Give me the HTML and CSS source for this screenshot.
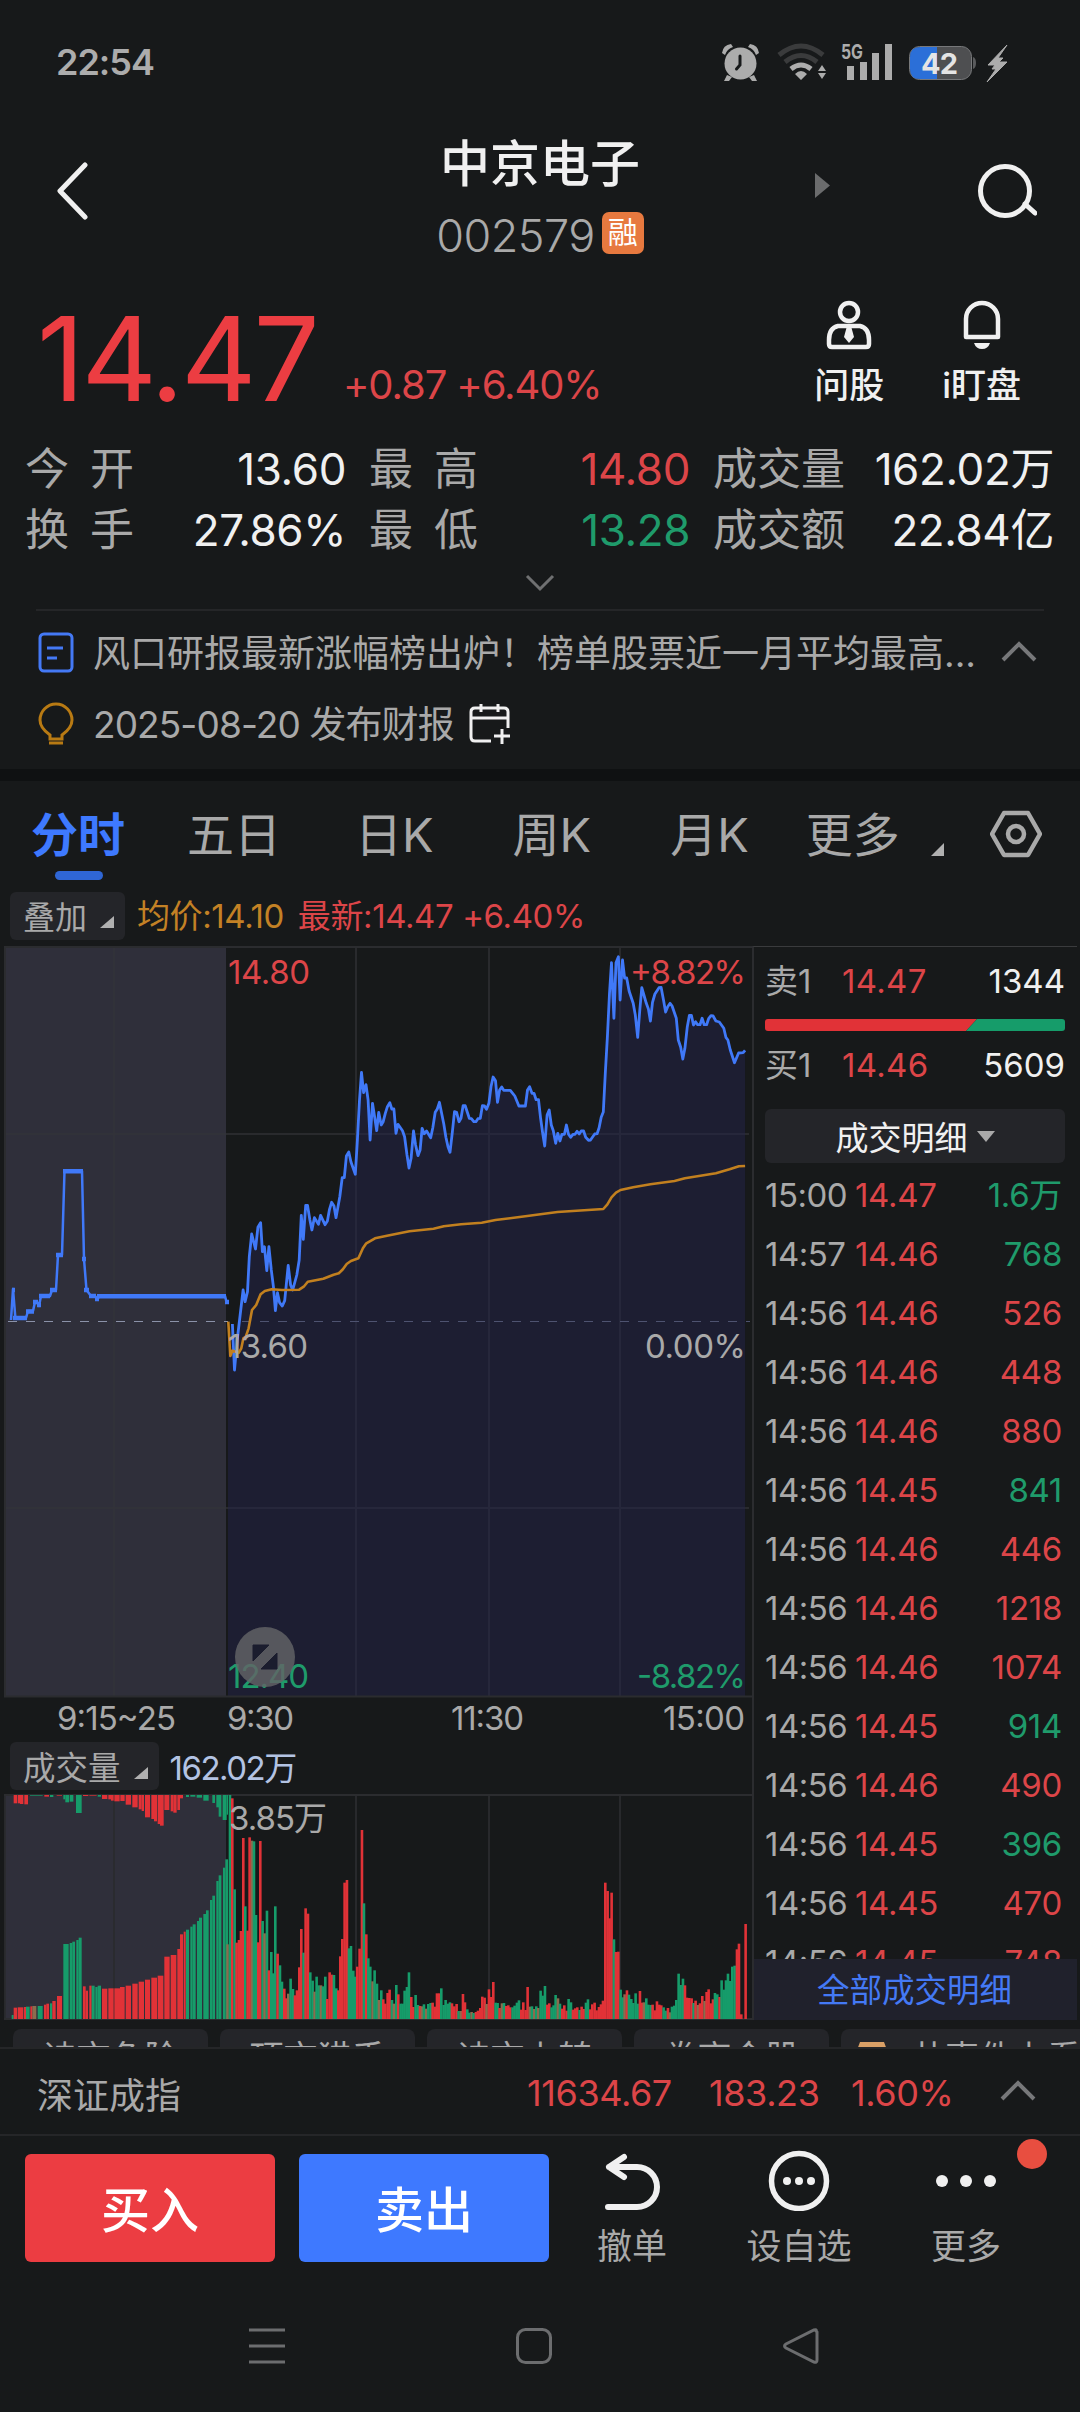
FILE: index.html
```html
<!DOCTYPE html>
<html lang="zh-CN">
<head>
<meta charset="utf-8">
<title>中京电子 002579</title>
<link rel="stylesheet" href="styles.css">
</head>
<body>
<div class="status">
  <span class="clock">22:54</span>
  <svg class="status-icons" width="292" height="44" viewBox="720 40 292 44">
    <g fill="#acacac">
      <ellipse cx="740.500" cy="63.500" rx="16" ry="16"/>
      <path d="M727 75l-3 6h5l3-4zM754 75l3 6h-5l-3-4z"/>
      <path d="M722 53q1-8 9-9l2 3q-6 2-8 8zM759 53q-1-8-9-9l-2 3q6 2 8 8z"/>
      <path d="M740 56v9l-3.500 4" fill="none" stroke="#17191a" stroke-width="3" stroke-linecap="round"/>
    </g>
    <g fill="none" stroke-width="5">
      <path d="M779 55q22-18 44 0" stroke="#3a3b3c"/>
      <path d="M785 62q16-13 32 0" stroke="#3a3b3c"/>
      <path d="M791 69q10-8 20 0" stroke="#acacac"/>
    </g>
    <path d="M801 80l-6-6q6-6 12 0zM822 65l4 6h-8zM822 79l4-6h-8z" fill="#acacac"/>
    <text x="841" y="59" class="fiveg" textLength="22" lengthAdjust="spacingAndGlyphs">5G</text>
    <path d="M847 66h7v14h-7zM860 62h7v18h-7zM872 53h7v27h-7zM885 44h7v36h-7z" fill="#acacac"/>
    <rect x="909.500" y="46.500" width="62" height="33" rx="10" fill="#4e4f51" stroke="#77787a"/>
    <path d="M937 47h-17q-10 0-10 10v12q0 10 10 10h17z" fill="#2b6fd8"/>
    <path d="M973 57q3 1 3 6t-3 6z" fill="#5a5b5d"/>
    <text x="921" y="74" class="batt" textLength="37">42</text>
    <path d="M1007 45l-19 20h7l-3 4h4l-9 13 20-20h-8l4-4h-5z" fill="#acacac" stroke="#acacac" stroke-linejoin="round"/>
  </svg>
</div>

<header class="header">
  <svg class="back" width="32" height="58" viewBox="0 0 32 58"><path d="M29 3L4 29l25 26" fill="none" stroke="#f0f0f0" stroke-width="5" stroke-linecap="round" stroke-linejoin="round"/></svg>
  <div class="title">
    <h1>中京电子</h1>
    <div class="code"><span>002579</span><b>融</b></div>
  </div>
  <div class="header-right">
    <svg width="15" height="25" viewBox="0 0 15 25"><path d="M0 0l15 12.500L0 25z" fill="#6b6c6d"/></svg>
    <svg class="search" width="62" height="58" viewBox="975 162 62 58"><g fill="none" stroke="#f0f0f0" stroke-width="5" stroke-linecap="round"><circle cx="1005" cy="191" r="24.500"/><path d="M1025 204l10 9"/></g></svg>
  </div>
</header>

<section class="quote">
  <div class="price">14.47</div>
  <div class="change">+0.87 +6.40%</div>
  <div class="act act-ask">
    <svg width="48" height="50" viewBox="0 0 48 50"><g fill="none" stroke="#f0f0f0" stroke-width="4.500"><circle cx="24" cy="12" r="9"/><path d="M13 26h22q9 2 9 14v4q0 3-3 3H7q-3 0-3-3v-4q0-12 9-14z" stroke-linejoin="round"/></g><path d="M22 26h4l3 11-5 6-5-6z" fill="#f0f0f0"/></svg>
    <span>问股</span>
  </div>
  <div class="act">
    <svg width="40" height="50" viewBox="0 0 40 50"><path d="M4 37V19a16 16 0 0 1 32 0v18z" fill="none" stroke="#f0f0f0" stroke-width="4.500" stroke-linejoin="round"/><path d="M12 43h16q-2 6-8 6t-8-6z" fill="#f0f0f0"/></svg>
    <span>i盯盘</span>
  </div>
</section>

<section class="stats">
  <span class="lab"><i>今</i><i>开</i></span><span class="val">13.60</span>
  <span class="lab inset"><i>最</i><i>高</i></span><span class="val up">14.80</span>
  <span class="lab inset"><i>成</i><i>交</i><i>量</i></span><span class="val">162.02万</span>
  <span class="lab"><i>换</i><i>手</i></span><span class="val">27.86%</span>
  <span class="lab inset"><i>最</i><i>低</i></span><span class="val down">13.28</span>
  <span class="lab inset"><i>成</i><i>交</i><i>额</i></span><span class="val">22.84亿</span>
</section>
<div class="expand"><svg width="30" height="18" viewBox="0 0 30 18"><path d="M2 2l13 13L28 2" fill="none" stroke="#6f7071" stroke-width="3"/></svg></div>

<section class="news">
  <div class="news-row">
    <svg width="36" height="42" viewBox="0 0 36 42"><g fill="none" stroke="#4479f5" stroke-width="3"><rect x="2" y="2" width="32" height="37" rx="4"/><path d="M9 16h16M9 26h10"/></g></svg>
    <p>风口研报最新涨幅榜出炉！榜单股票近一月平均最高...</p>
    <svg class="news-up" width="36" height="22" viewBox="0 0 36 22"><path d="M2 20L18 4l16 16" fill="none" stroke="#77787a" stroke-width="4"/></svg>
  </div>
  <div class="news-row">
    <svg width="36" height="44" viewBox="0 0 36 44"><g fill="none" stroke="#b87a13" stroke-width="3"><path d="M12 37v-4Q2 26 2 18a16 16 0 0 1 32 0q0 8-10 15v4z"/><path d="M11 41h14"/></g></svg>
    <p class="report">2025-08-20 发布财报</p>
    <svg class="cal" width="42" height="42" viewBox="0 0 42 42"><g fill="none" stroke="#f0f0f0" stroke-width="3"><path d="M22 38H6q-4 0-4-4V9q0-4 4-4h29q4 0 4 4v16M2 15h37M12 1v8M29 1v8M25 33h16M33 26v15"/></g></svg>
  </div>
</section>
<div class="band"></div>

<nav class="tabs">
  <span class="tab on">分时</span><span class="tab five">五日</span><span class="tab day">日K</span><span class="tab week">周K</span><span class="tab month">月K</span><span class="tab more">更多</span>
  <svg class="corner" width="13" height="13" viewBox="0 0 13 13"><path d="M13 0v13H0z" fill="#b0b0b0"/></svg>
  <svg class="hex" width="52" height="48" viewBox="0 0 52 48"><g fill="none" stroke="#a9a9a9" stroke-width="4.500" stroke-linejoin="round"><path d="M14 3h24l12 21-12 21H14L2 24z"/><circle cx="26" cy="24" r="8"/></g></svg>
</nav>

<div class="legend">
  <span class="chip">叠加<svg width="14" height="12" viewBox="0 0 14 12"><path d="M14 0v12H0z" fill="#b0b0b0"/></svg></span>
  <span class="avg">均价:14.10</span>
  <span class="last">最新:14.47 +6.40%</span>
</div>

<main class="board">
  <div class="charts">
    <svg class="chart" width="752" height="793" viewBox="0 946 752 793">
      <rect x="5" y="947" width="221" height="749" fill="#2f2f3a"/>
      <g stroke="#292a2d" stroke-width="2" fill="none">
        <path d="M356 947v749M489 947v749M620 947v749M226 1134h523M226 1508h523"/>
      </g>
      <path id="area" fill="#24244a" fill-opacity=".5"/>
      <g stroke="#33343a" stroke-width="1.500" fill="none"><path d="M114 947v749M5 1134h221M5 1508h221"/></g>
      <path d="M4 947h748M4 1696.500h748M5 946v750" stroke="#2b2c2f" stroke-width="2" fill="none"/>
      <path d="M8 1321.500h220" stroke="#8b92a8" stroke-width="1" stroke-dasharray="9 9"/>
      <path d="M242 1321.500h508" stroke="#4e5370" stroke-width="1" stroke-dasharray="9 9"/>
      <g fill="none" stroke="#4079f8" stroke-linejoin="round">
        <path stroke-width="2.500" d="M11 1320L13 1289L15.400 1318H26L28 1311H33L35 1302H37L39 1306L41 1296H50L52 1290H56L58 1255H62L64.500 1171H82L84 1259L86.500 1290L91 1296H95L97.500 1299L99.500 1296H225L226.500 1302"/>
        <path stroke-width="4.500" d="M13 1318H27M26 1311.500H34M33 1302H38M39 1296H50M50 1290H57M56 1255H63M63 1171.300H83M89 1296H96M97 1296.300H226M12 1290h3M37 1305h4M82 1259h4M84 1290h5M95 1299h4M225 1302h4"/>
        <path id="price" stroke-width="2.800"/>
      </g>
      <path id="mean" fill="none" stroke="#c2801f" stroke-width="2.600" stroke-linejoin="round"/>
      <g class="axis">
        <text x="228" y="984" class="up" textLength="82">14.80</text>
        <text x="630" y="984" class="up" textLength="116">+8.82%</text>
        <text x="228" y="1358" textLength="80">13.60</text>
        <text x="645" y="1358" textLength="101">0.00%</text>
        <text x="228" y="1688" class="down" textLength="81">12.40</text>
        <text x="637" y="1688" class="down" textLength="109">-8.82%</text>
        <text x="57" y="1730" textLength="119">9:15~25</text>
        <text x="227" y="1730" textLength="67">9:30</text>
        <text x="451" y="1730" textLength="73">11:30</text>
        <text x="663" y="1730" textLength="82">15:00</text>
      </g>
      <circle cx="265" cy="1657" r="30" fill="#636466" fill-opacity=".82"/>
      <path d="M253 1645h16l-16 16zM277 1653v16h-16z" fill="#1b1d2e" stroke="#1b1d2e" stroke-linejoin="round"/>
    </svg>
    <div class="vol-head"><span class="chip">成交量<svg width="14" height="12" viewBox="0 0 14 12"><path d="M14 0v12H0z" fill="#b0b0b0"/></svg></span><span class="vol-val">162.02万</span></div>
    <svg class="volume" width="752" height="226" viewBox="0 1794 752 226">
      <path d="M5 1795h221v224H5z" fill="#2f2f3a"/>
      <path d="M4 1795h748M4 2019h748M5 1795v224M114 1795v224M356 1795v224M489 1795v224M620 1795v224" stroke="#2b2c2f" stroke-width="1.800" fill="none"/>
      <g id="bars"></g>
      <text x="229" y="1830" class="vol-max" textLength="98">3.85万</text>
    </svg>
  </div>

  <aside class="side">
    <div class="level"><span>卖1</span><span class="up">14.47</span><b>1344</b></div>
    <svg class="ratio" width="300" height="12" viewBox="0 0 300 12"><path d="M3 0h209l-11 12H3q-3 0-3-3V3q0-3 3-3z" fill="#e13237"/><path d="M212 0h85q3 0 3 3v6q0 3-3 3h-96z" fill="#169c6a"/></svg>
    <div class="level"><span>买1</span><span class="up">14.46</span><b>5609</b></div>
    <div class="detail">成交明细<svg width="18" height="11" viewBox="0 0 18 11"><path d="M0 0h18L9 11z" fill="#a9a9a9"/></svg></div>
    <div class="ticks">
      <div class="tick"><span>15:00</span><span>14.47</span><b class="down">1.6万</b></div>
      <div class="tick"><span>14:57</span><span>14.46</span><b class="down">768</b></div>
      <div class="tick"><span>14:56</span><span>14.46</span><b>526</b></div>
      <div class="tick"><span>14:56</span><span>14.46</span><b>448</b></div>
      <div class="tick"><span>14:56</span><span>14.46</span><b>880</b></div>
      <div class="tick"><span>14:56</span><span>14.45</span><b class="down">841</b></div>
      <div class="tick"><span>14:56</span><span>14.46</span><b>446</b></div>
      <div class="tick"><span>14:56</span><span>14.46</span><b>1218</b></div>
      <div class="tick"><span>14:56</span><span>14.46</span><b>1074</b></div>
      <div class="tick"><span>14:56</span><span>14.45</span><b class="down">914</b></div>
      <div class="tick"><span>14:56</span><span>14.46</span><b>490</b></div>
      <div class="tick"><span>14:56</span><span>14.45</span><b class="down">396</b></div>
      <div class="tick"><span>14:56</span><span>14.45</span><b>470</b></div>
      <div class="tick"><span>14:56</span><span>14.45</span><b>748</b></div>
    </div>
    <div class="all">全部成交明细</div>
  </aside>
</main>

<div class="topics">
  <span>诗市负险</span><span>顶市猎手</span><span>诗市上转</span><span>券商金股</span>
  <span class="wide"><svg width="30" height="30" viewBox="0 0 30 30"><path d="M3 0h24l3 8v22H0V8z" fill="#d9a066"/></svg>共事件上看</span>
</div>

<div class="index">
  <span class="iname">深证成指</span><span class="i1">11634.67</span><span class="i2">183.23</span><span class="i3">1.60%</span>
  <svg width="36" height="22" viewBox="0 0 36 22"><path d="M2 20L18 4l16 16" fill="none" stroke="#77787a" stroke-width="4"/></svg>
</div>

<footer class="trade">
  <div class="btn buy">买入</div>
  <div class="btn sell">卖出</div>
  <div class="tool t1"><svg width="64" height="64" viewBox="0 0 64 64"><g fill="none" stroke="#f0f0f0" stroke-width="6" stroke-linecap="round" stroke-linejoin="round"><path d="M24 10L9 20l15 10M9 20h28a20 20 0 0 1 0 40H8"/></g></svg><span>撤单</span></div>
  <div class="tool t2"><svg width="64" height="64" viewBox="0 0 64 64"><circle cx="32" cy="34" r="27.500" fill="none" stroke="#f0f0f0" stroke-width="5.500"/><g fill="#f0f0f0"><circle cx="20" cy="34" r="4"/><circle cx="32" cy="34" r="4"/><circle cx="44" cy="34" r="4"/></g></svg><span>设自选</span></div>
  <div class="tool t3"><svg width="64" height="64" viewBox="0 0 64 64"><g fill="#f0f0f0"><circle cx="8" cy="34" r="6"/><circle cx="32" cy="34" r="6"/><circle cx="56" cy="34" r="6"/></g></svg><span>更多</span><i class="dot"></i></div>
</footer>

<div class="sysnav">
  <svg width="36" height="36" viewBox="0 0 36 36"><path d="M0 2h36M0 18h36M0 34h36" stroke="#6c6d6f" stroke-width="3"/></svg>
  <svg width="36" height="36" viewBox="0 0 36 36"><rect x="1.500" y="1.500" width="33" height="33" rx="8" fill="none" stroke="#6c6d6f" stroke-width="3"/></svg>
  <svg width="36" height="36" viewBox="0 0 36 36"><path d="M33 3Q34 1 31 2L3 16q-3 2 0 4l28 14q3 1 3-2V4z" fill="none" stroke="#6c6d6f" stroke-width="3"/></svg>
</div>
<script src="chart.js"></script>
</body>
</html>
```
FILE: styles.css
```css
* { box-sizing: border-box; }
html, body { margin: 0; padding: 0; }
body {
  width: 1080px; height: 2412px; overflow: hidden;
  background: #17191a; color: #a9a9a9;
  font-family: Inter, "Noto Sans CJK SC", sans-serif;
  display: flex; flex-direction: column;
}
body > * { flex: none; }
svg { display: block; flex: none; }
i, b { font-style: normal; font-weight: 400; }
.up { color: #dc4548; fill: #dc4548; }
.down { color: #1f9b6b; fill: #1f9b6b; }

.status { height: 124px; display: flex; justify-content: space-between; align-items: center; padding: 0 68px 0 56px; }
.clock { font-size: 36px; font-weight: 600; letter-spacing: -1px; color: #acacac; }
.fiveg { font-size: 20px; font-weight: 700; fill: #acacac; }
.batt { font-size: 29px; font-weight: 700; fill: #e4e4e4; }

.header { height: 166px; display: grid; grid-template-columns: 390px 300px 390px; }
.back { margin: 38px 0 0 56px; }
.title { display: flex; flex-direction: column; align-items: center; }
h1 { margin: 9px 0 0; font-size: 50px; line-height: 62px; font-weight: 500; color: #f0f0f0; }
.code { display: flex; align-items: center; gap: 7px; margin-top: 16px; height: 48px; font-size: 45px; font-weight: 300; letter-spacing: -.500px; line-height: 48px; }
.code span { margin-top: 1px; }
.code b { width: 42px; height: 42px; border-radius: 7px; background: #e7793f; color: #fff; font-size: 30px; line-height: 40px; text-align: center; letter-spacing: 0; margin-top: -4px; }
.header-right { display: flex; justify-content: space-between; padding: 0 43px 0 125px; }
.header-right svg:first-child { margin-top: 49px; }
.search { margin-top: 38px; }

.quote { height: 140px; display: flex; align-items: flex-start; padding: 11px 59px 0 37px; }
.price { width: 306px; font-size: 117px; line-height: 116px; letter-spacing: -3px; color: #ec3d42; white-space: nowrap; }
.change { flex: 1; font-size: 40px; line-height: 48px; margin-top: 60px; letter-spacing: -1.100px; color: #dc4548; white-space: nowrap; }
.act { display: flex; flex-direction: column; align-items: center; gap: 8px; font-size: 35px; font-weight: 500; line-height: 50px; color: #f0f0f0; }
.act svg { margin-top: -1px; }
.act span { margin-top: 2px; white-space: nowrap; }
.act-ask { margin-right: 58px; }

.stats { height: 137px; display: grid; grid-template-columns: 109px 212px 132px 212px 155px 209px; grid-auto-rows: 61px; padding: 9px 0 0 25px; font-size: 44px; line-height: 61px; }
.lab { display: flex; justify-content: space-between; }
.inset { padding-left: 23px; }
.val { text-align: right; letter-spacing: -.400px; color: #f0f0f0; white-space: nowrap; }
.val.up { color: #dc4548; }
.val.down { color: #1f9b6b; }
.expand { height: 44px; margin: 0 36px; border-bottom: 2px solid #252628; display: flex; justify-content: center; padding-top: 7px; }

.news { height: 158px; padding: 6px 43px 0 38px; }
.news-row { height: 71px; display: flex; align-items: center; font-size: 37px; }
.news-row p { margin: -4px 0 0 19px; white-space: nowrap; }
.news-row .report { letter-spacing: -.900px; }
.news-up { margin: -4px 0 0 auto; }
.cal { margin-left: 15px; }
.band { height: 12px; background: #0f1112; }

.tabs { height: 104px; display: flex; align-items: center; padding: 0 0 0 31px; font-size: 47px; }
.tab { height: 104px; line-height: 108px; white-space: nowrap; margin-right: 62px; }
.five { margin-right: 74px; }
.day, .week { margin-right: 79px; }
.month { margin-right: 57px; }
.on { position: relative; color: #3e79ff; font-weight: 700; }
.on::after { content: ""; position: absolute; left: 24px; top: 90px; width: 48px; height: 9px; border-radius: 5px; background: #2f66d5; }
.more { margin-right: 31px; }
.corner { margin-top: 32px; }
.hex { margin: 2px 0 0 46px; }

.legend { height: 61px; display: flex; align-items: center; padding: 0 0 0 10px; font-size: 33px; letter-spacing: -.400px; white-space: nowrap; }
.chip { height: 48px; display: flex; align-items: center; gap: 13px; padding: 0 11px 2px 13px; border-radius: 6px; background: #242529; font-size: 32px; letter-spacing: 0; }
.chip svg { margin-top: 14px; }
.avg { margin: -4px 0 0 12px; }
.avg { color: #c38125; }
.last { margin: -4px 0 0 14px; color: #dc4548; }

.board { height: 1074px; display: flex; }
.charts { width: 752px; }
.axis { font-size: 33px; fill: #a9a9a9; }
.vol-head { height: 55px; display: flex; align-items: center; padding: 0 0 2px 10px; font-size: 33px; }
.vol-head .chip { padding-bottom: 0; font-size: 32.500px; }
.vol-val { margin-left: 11px; color: #b3c3e3; letter-spacing: -1.500px; }
.vol-max { font-size: 33px; fill: #a9a9a9; }

.side { width: 325px; height: 1074px; border-left: 2px solid #2b2c2f; border-top: 1px solid #3a3b3d; display: flex; flex-direction: column; font-size: 33px; padding-left: 11px; }
.level { display: grid; grid-template-columns: 77px 1fr auto; height: 72px; line-height: 69px; padding-right: 12px; }
.level .up { letter-spacing: .300px; }
.level b { color: #f0f0f0; }
.ratio + .level { height: 78px; }
.detail { width: 300px; height: 54px; border-radius: 6px; background: #242529; color: #f0f0f0; display: flex; align-items: center; justify-content: center; gap: 9px; }
.ticks { height: 796px; overflow: hidden; padding-top: 2px; }
.tick { height: 59px; line-height: 60px; display: grid; grid-template-columns: 90px 1fr auto; padding-right: 15px; color: #dc4548; letter-spacing: -.300px; }
.tick span:first-child { color: #a9a9a9; letter-spacing: -.500px; }
.tick .down { color: #1f9b6b; }
.all { height: 61px; margin-left: -11px; background: #20212c; color: #4479f5; text-align: center; font-size: 32.500px; line-height: 63px; padding-right: 2px; }

.topics { height: 29px; padding: 9px 0 0 13px; display: flex; gap: 12px; overflow: hidden; border-bottom: 2px solid #252628; }
.topics span { flex: none; width: 195px; height: 60px; border-radius: 8px; background: #242529; font-size: 34px; line-height: 58px; text-align: center; }
.topics .wide { width: 260px; display: flex; gap: 24px; padding: 0 16px; white-space: nowrap; }
.topics .wide svg { margin-top: 13px; }

.index { height: 87px; display: flex; align-items: center; padding: 2px 44px 0 37px; border-bottom: 2px solid #252628; font-size: 36px; color: #dc4548; letter-spacing: -.400px; }
.iname { width: 490px; color: #a9a9a9; letter-spacing: 0; }
.i1 { width: 182px; } .i2 { width: 142px; } .i3 { flex: 1; }
.index svg { margin-top: -5px; }

.trade { height: 150px; display: flex; padding: 18px 0 0 25px; }
.btn { width: 250px; height: 108px; margin-right: 24px; border-radius: 6px; color: #fff; font-size: 49px; font-weight: 500; line-height: 114px; text-align: center; }
.buy { background: #ec3d42; }
.sell { background: #3e79ff; }
.tool { position: relative; width: 110px; display: flex; flex-direction: column; align-items: center; font-size: 35px; line-height: 50px; margin-top: -7px; white-space: nowrap; }
.tool span { margin-top: 10px; }
.t1 { margin-left: 4px; } .t2 { margin-left: 57px; } .t3 { margin-left: 57px; }
.dot { position: absolute; left: 106px; top: -8px; width: 30px; height: 30px; border-radius: 50%; background: #e84e40; }

.sysnav { display: flex; justify-content: space-between; padding: 42px 261px 0 249px; }
```
FILE: chart.js
```javascript
const priceLine = "36,1152 42,1290 50,1200 67,1050 73,1085 80,1055 85,950 92,882 103,927 110,862 118,848 123,935 129,920 136,992 142,920 149,990 155,1040 161,1112 167,1058 173,1088 181,1098 188,1082 198,976 205,1035 211,1050 223,1005 230,960 236,826 242,898 249,796 254,796 261,840 267,870 274,833 286,853 292,826 305,854 312,843 318,808 324,787 331,798 337,833 348,770 355,713 361,713 367,648 374,636 380,665 393,703 399,600 405,480 411,397 417,458 424,434 430,480 436,600 443,490 449,530 455,572 461,517 468,555 474,545 480,520 486,500 493,488 499,507 505,507 511,580 517,553 530,572 536,590 543,645 549,684 555,655 562,573 568,615 575,647 581,630 587,565 593,581 600,573 612,593 618,563 625,517 631,507 637,487 650,552 656,592 662,620 668,637 675,575 681,515 687,517 694,545 700,535 706,497 712,497 724,535 730,536 737,545 743,545 749,536 756,535 762,497 768,498 774,508 781,490 787,440 793,411 800,422 806,487 812,450 818,441 824,451 843,451 850,460 856,468 868,498 887,498 893,450 899,440 906,460 912,460 918,479 925,479 931,535 937,580 943,618 950,525 956,510 962,555 968,572 975,610 981,580 987,603 993,583 1000,583 1006,555 1012,583 1018,592 1025,583 1031,583 1037,574 1043,582 1049,573 1056,573 1062,592 1070,601 1076,600 1088,582 1095,581 1101,563 1107,532 1113,516 1119,400 1125,290 1131,160 1137,68 1144,235 1150,68 1157,50 1162,180 1169,60 1175,114 1181,114 1188,153 1200,190 1206,225 1213,292 1219,210 1225,143 1231,165 1238,190 1244,207 1250,243 1256,187 1263,162 1275,143 1281,142 1288,180 1294,216 1300,200 1307,190 1313,198 1325,235 1331,300 1338,322 1344,357 1350,325 1357,260 1363,226 1369,226 1375,255 1381,245 1387,254 1394,254 1400,235 1406,254 1413,254 1419,236 1426,227 1432,228 1440,243 1450,246 1463,265 1469,292 1475,300 1482,330 1494,368 1506,339 1519,338 1525,331";
const meanLine = "24,1145 30,1248 36,1232 55,1238 62,1225 68,1195 75,1190 83,1165 93,1110 105,1095 118,1063 130,1053 150,1048 180,1050 230,1049 243,1040 255,1025 300,1016 330,1004 345,1000 357,988 368,972 380,963 402,955 415,925 425,910 450,895 485,887 550,874 620,866 650,859 700,853 760,848 800,840 870,831 980,816 1113,807 1125,793 1137,772 1150,758 1163,750 1200,742 1250,733 1320,723 1350,715 1440,700 1480,688 1507,679 1525,678";
const toPath = s => "M" + s.split(" ").map(p => {
  const [x, y] = p.split(",");
  return (220 + x / 2.904).toFixed(1) + " " + (940 + y / 3).toFixed(1);
}).join("L");
const price = toPath(priceLine);
document.getElementById("price").setAttribute("d", price);
document.getElementById("mean").setAttribute("d", toPath(meanLine));
document.getElementById("area").setAttribute("d", price + "V1696H228V1355Z");

// Call auction: matched volume from the base line, unmatched hanging from the top.
// Each entry is left,right,edge,colour in thirds of a pixel.
const matched = "35,41,705,g 41,51,683,r 53,60,682,r 60,70,682,r 72,78,681,r 78,89,680,g 91,97,679,r 97,109,678,m 113,128,678,g 132,139,674,r 139,147,671,r 150,157,670,g 157,167,663,r 171,186,648,r 190,206,492,g 209,217,489,g 217,225,485,g 229,236,480,g 236,245,473,g 249,257,619,r 257,264,632,r 268,275,617,r 275,284,617,g 286,293,621,g 293,303,617,g 306,322,626,r 325,341,625,r 343,360,625,r 360,374,621,r 377,393,617,r 397,413,611,r 416,432,605,r 435,450,599,r 454,471,593,r 473,490,587,r 493,509,530,r 512,529,525,r 532,540,507,r 540,549,463,r 551,557,455,r 558,567,449,g 571,578,440,g 578,587,433,g 591,597,423,g 597,606,413,g 610,618,402,g 618,626,391,g 630,637,360,g 637,645,347,g 649,656,303,g 656,664,286,g 669,676,263,g 676,684,238,g";
const unmatched = "41,51,70,r 53,60,70,r 60,70,72,r 73,84,73,r 90,128,47,g 133,147,50,r 150,160,51,g 170,186,47,r 190,196,58,g 196,207,67,g 209,220,65,g 228,245,99,g 249,265,48,r 268,290,47,r 293,303,50,g 306,322,57,r 325,333,58,r 333,341,62,r 343,359,64,r 361,374,63,r 377,393,74,r 397,413,82,r 416,425,88,r 425,432,93,r 435,450,112,r 454,462,117,r 462,471,124,r 473,480,132,r 480,491,137,r 493,508,90,r 512,520,94,r 520,530,98,r 532,540,90,r 540,549,55,r 558,567,51,g 571,586,50,g 590,606,53,g 610,626,62,g 637,645,69,g 649,657,82,g 656,664,110,g 668,680,120,g 680,684,104,g";
// Continuous trading: left,edge,colour.
const early = "679,493,m 686,45,g 693,55,r 700,328,g 706,488,r 713,480,r 719,453,r 726,174,r 732,379,g 739,452,r 745,172,r 752,182,m 758,184,g 764,405,g 771,487,r 777,183,r 784,423,g 790,460,m 797,392,g 803,571,r 810,516,g 816,580,g 822,379,g 829,521,r 836,556,g 842,605,g 849,626,r 855,655,r 861,641,m 868,596,g 875,627,g 881,646,r 887,631,r 894,562,r 900,447,r 907,518,g 913,385,r 920,401,r 927,577,g 934,602,g 940,635,m 946,590,g 952,616,g 959,616,m 965,619,g 972,590,g 978,657,r 985,577,r 992,584,r 998,585,g 1005,625,g 1011,631,r 1017,529,r 1023,477,r 1030,308,r 1037,300,r 1043,505,g 1049,498,g 1056,572,g 1062,590,g 1068,560,r 1075,506,r 1082,150,r 1088,370,g 1095,463,r 1101,535,g 1107,560,g 1114,604,m 1120,571,g 1127,611,g 1133,660,m";
const rest = "0,631,g 6,658,r 12,671,r 19,639,r 25,629,r 32,660,g 38,671,m 45,615,g 51,643,r 58,671,g 64,671,g 70,632,g 77,621,g 83,577,g 90,651,r 96,681,r 103,645,g 110,675,g 116,678,r 122,679,m 128,673,g 135,686,m 141,672,g 148,669,g 154,668,r 161,680,r 167,640,r 174,640,r 180,625,g 187,675,g 193,660,g 200,671,g 206,667,g 212,670,r 219,679,r 226,672,r 232,693,g 239,693,m 245,642,r 251,667,r 258,688,g 264,698,g 271,696,m 277,699,g 284,696,r 290,692,r 297,684,r 303,650,r 310,653,r 316,672,m 323,628,r 329,651,r 336,606,r 343,668,g 349,669,g 355,684,r 362,670,m 368,669,g 375,678,r 381,676,r 387,682,r 394,682,g 400,677,g 407,668,g 413,661,g 420,689,r 426,667,r 433,690,r 439,621,r 446,680,m 452,679,g 459,687,m 465,679,g 471,684,m 478,632,g 484,647,g 491,618,g 498,674,r 504,670,r 511,682,g 517,676,g 523,645,g 530,655,m 536,671,g 543,686,r 549,676,r 556,692,r 562,657,g 569,667,g 575,689,r 582,685,r 588,682,r 595,690,g 601,680,r 607,687,r 614,668,g 620,658,g 627,688,r 633,673,r 640,668,r 646,691,r 653,681,r 659,673,r 665,662,r 672,308,r 679,333,r 685,415,r 691,338,r 698,478,g 704,516,r 711,515,r 718,629,g 724,652,g 730,643,m 737,631,r 743,644,g 750,657,g 756,669,g 763,640,g 769,671,g 776,633,r 782,668,r 788,667,m 795,655,g 801,674,g 808,675,g 814,674,r 821,691,r 827,664,r 834,674,r 840,676,r 847,682,g 853,692,g 860,684,r 866,697,m 872,680,g 879,677,g 885,660,g 892,581,g 898,615,g 905,596,g 911,616,r 917,653,r 924,654,r 931,655,r 937,669,g 943,662,r 950,675,m 956,670,r 963,648,r 970,663,m 976,636,r 982,628,r 989,670,r 995,658,r 1001,639,g 1008,643,g 1015,651,r 1021,601,g 1028,629,g 1034,601,g 1040,581,g 1047,603,g 1053,560,g 1060,557,g 1067,508,r 1073,491,r 1080,703,r 1093,432,r";
const colours = { r: "#e13237", g: "#169c6a", m: "#8c6c4e" };
const rows = s => s.split(" ").map(p => p.split(","));
const rects = [];
const bar = (x0, x1, y0, y1, c) => rects.push(
  `<rect x="${(x0 / 3).toFixed(2)}" y="${(1780 + y0 / 3).toFixed(2)}" width="${((x1 - x0) / 3).toFixed(2)}" height="${((y1 - y0) / 3).toFixed(2)}" fill="${colours[c]}"/>`);
rows(matched).forEach(([a, b, y, c]) => bar(+a, +b, +y, 717, c));
rows(unmatched).forEach(([a, b, y, c]) => bar(+a, +b, 45, +y, c));
rows(early).forEach(([x, y, c]) => bar(+x, +x + 7.8, +y, 717, c));
rows(rest).forEach(([x, y, c]) => bar(+x + 1140, +x + 1147.8, +y, 717, c));
document.getElementById("bars").innerHTML = rects.join("");
```
